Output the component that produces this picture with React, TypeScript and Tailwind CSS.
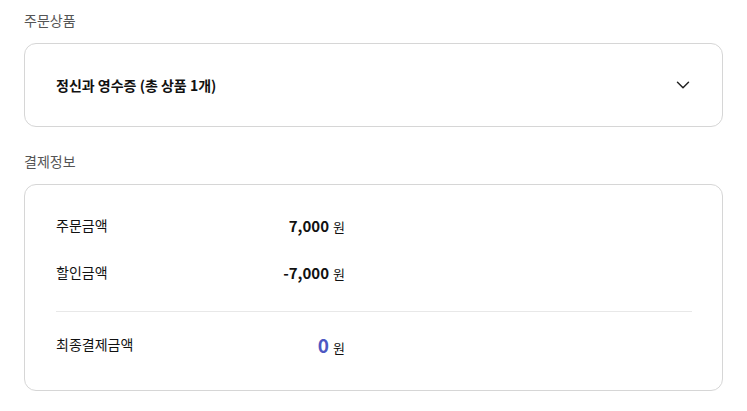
import { ChevronDown } from "lucide-react";

const font = {
  fontFamily: '"Noto Sans CJK KR", "Noto Sans", sans-serif',
};

function Row({
  label,
  value,
  accent,
}: {
  label: string;
  value: string;
  accent?: boolean;
}) {
  return (
    <div className="flex w-[289px] items-center justify-between">
      <span className="text-[14px] text-[#111]">{label}</span>
      <span className="flex items-baseline gap-[4px]">
        <span
          className={
            accent
              ? "text-[19px] font-bold leading-none text-[#4d58c2]"
              : "text-[15px] font-bold leading-none text-[#111]"
          }
        >
          {value}
        </span>
        <span className="text-[13px] leading-none text-[#111]">원</span>
      </span>
    </div>
  );
}

export default function App() {
  return (
    <div className="min-h-screen bg-white px-6" style={font}>
      <div className="w-[699px]">
        <h2 className="pt-[10px] text-[14px] leading-[20px] text-[#555]">주문상품</h2>
        <div className="mt-[13px] flex h-[84px] items-center justify-between rounded-xl border border-[#d6d6d6] pl-[31px] pr-[28px]">
          <span className="text-[14px] font-bold text-[#111]">
            정신과 영수증 (총 상품 1개)
          </span>
          <ChevronDown className="h-[22px] w-[22px] text-[#222]" strokeWidth={1.6} />
        </div>

        <h2 className="mt-[24px] text-[14px] leading-[20px] text-[#555]">결제정보</h2>
        <div className="mt-[13px] flex h-[207px] flex-col rounded-xl border border-[#d6d6d6] pl-[31px] pr-[30px]">
          <div className="mt-[30px]">
            <Row label="주문금액" value="7,000" />
          </div>
          <div className="mt-[26px]">
            <Row label="할인금액" value="-7,000" />
          </div>
          <div className="mt-[28px] h-px bg-[#e8e8e8]" />
          <div className="mt-[22px]">
            <Row label="최종결제금액" value="0" accent />
          </div>
        </div>
      </div>
    </div>
  );
}
